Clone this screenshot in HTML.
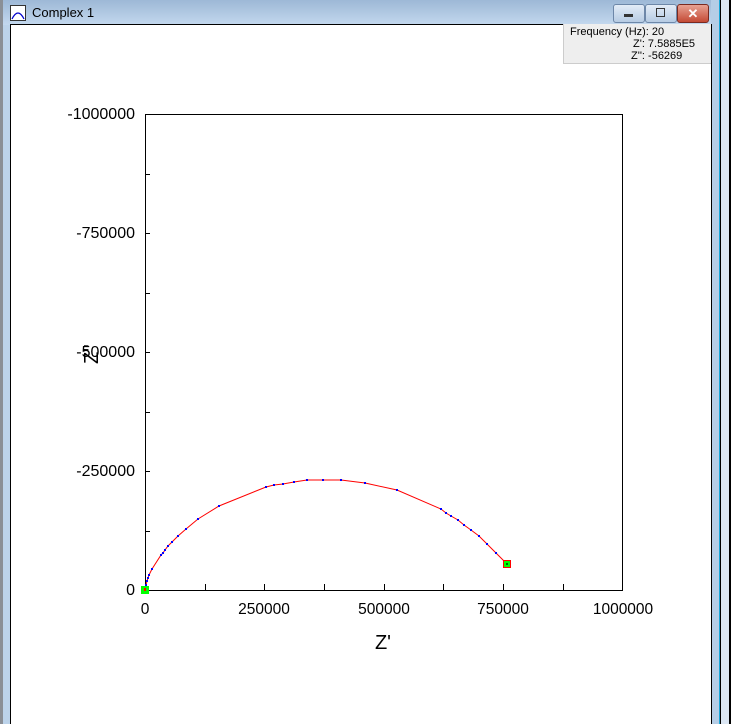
<!DOCTYPE html>
<html><head><style>
body{margin:0;width:731px;height:724px;overflow:hidden;background:#fff;font-family:"Liberation Sans",Arial,sans-serif;position:relative}
.a{position:absolute}
</style></head><body>
<div class="a" style="left:0;top:0;width:731px;height:724px;background:#bcd3ea"></div>
<div class="a" style="left:0;top:0;width:731px;height:25px;background:linear-gradient(#9db8d6,#c3d8ee)"></div>
<div class="a" style="left:0;top:0;width:3px;height:724px;background:#8a8f96"></div>
<div class="a" style="left:10px;top:24px;width:702px;height:700px;background:#000"></div>
<div class="a" style="left:11px;top:25px;width:700px;height:699px;background:#fff"></div>
<div class="a" style="left:711px;top:0;width:20px;height:724px;background:#b5cde6"></div>
<div class="a" style="left:711px;top:24px;width:1px;height:700px;background:#000"></div>
<div class="a" style="left:719px;top:0;width:1px;height:724px;background:#1aa6d8"></div>
<div class="a" style="left:720px;top:0;width:1px;height:724px;background:#000"></div>
<div class="a" style="left:721px;top:0;width:8px;height:724px;background:#dbe6f3"></div>
<div class="a" style="left:729px;top:0;width:2px;height:724px;background:#000"></div>
<svg class="a" style="left:10px;top:5px" width="16" height="16"><rect x="0.5" y="0.5" width="15" height="15" fill="#fff" stroke="#333"/><path d="M2 14 Q8 2 14 14" fill="none" stroke="#00c" stroke-width="1.3"/></svg>
<div class="a" style="left:32px;top:5px;font-size:13px;color:#000">Complex 1</div>
<div class="a" style="left:613px;top:4px;width:30px;height:17px;border:1px solid #6d87a8;border-radius:3px;background:linear-gradient(#e3ecf7,#b6cbe3)"><div class="a" style="left:10px;top:9px;width:9px;height:3px;background:#333"></div></div>
<div class="a" style="left:645px;top:4px;width:30px;height:17px;border:1px solid #6d87a8;border-radius:3px;background:linear-gradient(#e3ecf7,#b6cbe3)"><div class="a" style="left:10px;top:3px;width:7px;height:7px;border:1px solid #333"></div></div>
<div class="a" style="left:677px;top:4px;width:30px;height:17px;border:1px solid #7a2a20;border-radius:3px;background:linear-gradient(#e8a293,#c44a35);color:#fff;font-weight:bold;font-size:13px;text-align:center;line-height:17px">✕</div>
<div class="a" style="left:563px;top:24px;width:147px;height:39px;background:#eeeeee;border-left:1px solid #ccc;border-bottom:1px solid #ccc;font-size:11px;line-height:12px;color:#000">
<div class="a" style="left:6px;top:2px">Frequency (Hz): 20</div>
<div class="a" style="left:69px;top:14px">Z': 7.5885E5</div>
<div class="a" style="left:67px;top:26px">Z'': -56269</div>
</div>
<svg class="a" style="left:0;top:0" width="731" height="724" font-family="Liberation Sans,Arial,sans-serif" font-size="15">
<rect x="145.5" y="114.5" width="477" height="476" fill="none" stroke="#000"/>
<g stroke="#000">
<path d="M145 174.5h5M145 233.5h5M145 293.5h5M145 352.5h5M145 412.5h5M145 471.5h5M145 531.5h5"/>
<path d="M205.5 590v-6M264.5 590v-6M324.5 590v-6M384.5 590v-6M443.5 590v-6M503.5 590v-6M563.5 590v-6"/>
</g>
<g text-anchor="end" font-size="16">
<text x="135" y="119">-1000000</text>
<text x="135" y="238">-750000</text>
<text x="135" y="357">-500000</text>
<text x="135" y="476">-250000</text>
<text x="135" y="595">0</text>
</g>
<g text-anchor="middle" font-size="15.5">
<text x="145" y="614">0</text>
<text x="264" y="614">250000</text>
<text x="384" y="614">500000</text>
<text x="503" y="614">750000</text>
<text x="623" y="614">1000000</text>
<text x="383" y="649" font-size="20">Z'</text>
</g>
<text x="0" y="0" font-size="20" transform="translate(98,364) rotate(-90)">Z''</text>
<polyline fill="none" stroke="#f00" stroke-width="1" points="145,590 146,585 147,581 148,578 149,575 152,569 161,555 163,553 165,550 168,546 172,542 178,536 186,529 198,519 219,506 266,487 274,485 283,484 294,482 307,480 323,480 341,480 365,483 397,490 441,509 446,513 451,516 458,520 464,525 471,530 479,536 487,544 496,553 507,564"/>
<g fill="#00f">
<rect x="145" y="584" width="2" height="2"/><rect x="146" y="580" width="2" height="2"/><rect x="147" y="577" width="2" height="2"/><rect x="148" y="574" width="2" height="2"/><rect x="151" y="568" width="2" height="2"/><rect x="160" y="554" width="2" height="2"/><rect x="162" y="552" width="2" height="2"/><rect x="164" y="549" width="2" height="2"/><rect x="167" y="545" width="2" height="2"/><rect x="171" y="541" width="2" height="2"/><rect x="177" y="535" width="2" height="2"/><rect x="185" y="528" width="2" height="2"/><rect x="197" y="518" width="2" height="2"/><rect x="218" y="505" width="2" height="2"/><rect x="265" y="486" width="2" height="2"/><rect x="273" y="484" width="2" height="2"/><rect x="282" y="483" width="2" height="2"/><rect x="293" y="481" width="2" height="2"/><rect x="306" y="479" width="2" height="2"/><rect x="322" y="479" width="2" height="2"/><rect x="340" y="479" width="2" height="2"/><rect x="364" y="482" width="2" height="2"/><rect x="396" y="489" width="2" height="2"/><rect x="440" y="508" width="2" height="2"/><rect x="445" y="512" width="2" height="2"/><rect x="450" y="515" width="2" height="2"/><rect x="457" y="519" width="2" height="2"/><rect x="463" y="524" width="2" height="2"/><rect x="470" y="529" width="2" height="2"/><rect x="478" y="535" width="2" height="2"/><rect x="486" y="543" width="2" height="2"/><rect x="495" y="552" width="2" height="2"/>
</g>
<rect x="141" y="586" width="8" height="8" fill="#0f0"/>
<rect x="144" y="588" width="2" height="3" fill="#f00"/>
<rect x="503.5" y="560.5" width="7" height="7" fill="#0f0" stroke="#f00"/>
<rect x="506" y="563" width="2" height="2" fill="#060"/>
</svg>
</body></html>
